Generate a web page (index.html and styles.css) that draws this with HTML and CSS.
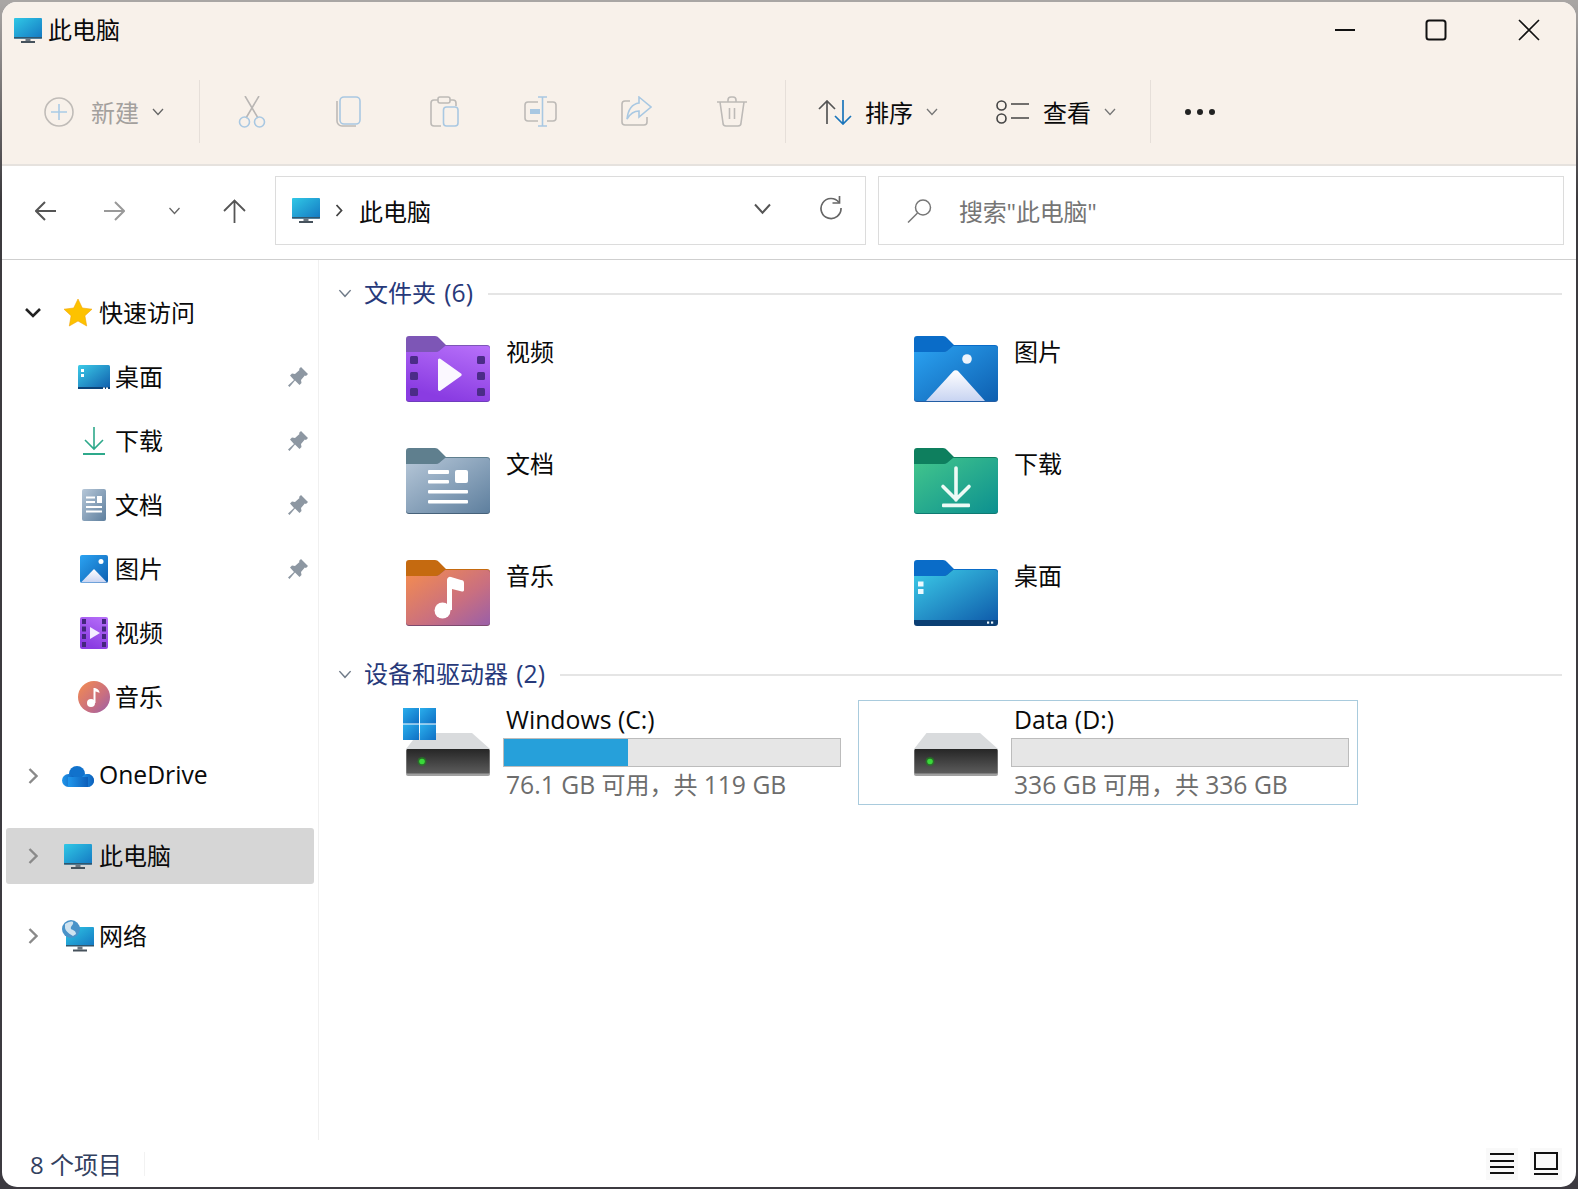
FILE: index.html
```html
<!DOCTYPE html>
<html lang="zh-CN">
<head>
<meta charset="utf-8">
<title>此电脑</title>
<link rel="stylesheet" href="styles.css">
</head>
<body>
<svg class="defs" aria-hidden="true">
  <defs>
    <linearGradient id="gMon" x1="0" y1="0" x2="1" y2="1"><stop offset="0" stop-color="#30c8e6"/><stop offset="1" stop-color="#1478c2"/></linearGradient>
    <linearGradient id="gVid" x1="1" y1="0" x2="0.6" y2="1"><stop offset="0" stop-color="#b871fa"/><stop offset="1" stop-color="#8a3ce2"/></linearGradient>
    <linearGradient id="gDoc" x1="0" y1="0" x2="1" y2="1"><stop offset="0" stop-color="#b6c7d8"/><stop offset="1" stop-color="#5e7f9e"/></linearGradient>
    <linearGradient id="gMus" x1="0" y1="0" x2="1" y2="1"><stop offset="0" stop-color="#f58d4e"/><stop offset="0.6" stop-color="#c96f80"/><stop offset="1" stop-color="#9a5fa8"/></linearGradient>
    <linearGradient id="gPic" x1="0" y1="0" x2="1" y2="1"><stop offset="0" stop-color="#2ba3f2"/><stop offset="1" stop-color="#0e5fb0"/></linearGradient>
    <linearGradient id="gMnt" x1="0" y1="0" x2="0" y2="1"><stop offset="0" stop-color="#ffffff"/><stop offset="1" stop-color="#c8d4f2"/></linearGradient>
    <linearGradient id="gDl" x1="0" y1="0" x2="1" y2="1"><stop offset="0" stop-color="#43c68c"/><stop offset="1" stop-color="#0c9090"/></linearGradient>
    <linearGradient id="gDsk" x1="0" y1="0" x2="1" y2="1"><stop offset="0" stop-color="#3ccbe8"/><stop offset="1" stop-color="#0f5cab"/></linearGradient>
    <linearGradient id="gDrv" x1="0" y1="0" x2="0" y2="1"><stop offset="0" stop-color="#262626"/><stop offset="1" stop-color="#5c5c5c"/></linearGradient>
    <linearGradient id="gWin" x1="0" y1="0" x2="1" y2="1"><stop offset="0" stop-color="#2aaeec"/><stop offset="1" stop-color="#0f6fc4"/></linearGradient>
    <linearGradient id="gCld" x1="0" y1="0" x2="1" y2="0"><stop offset="0" stop-color="#2097ec"/><stop offset="1" stop-color="#0d5fba"/></linearGradient>
    <symbol id="monitor" viewBox="0 0 28 25">
      <rect x="0" y="0" width="28" height="20.5" rx="1" fill="url(#gMon)"/>
      <rect x="0" y="19" width="28" height="1.6" fill="#30566e"/>
      <rect x="11.5" y="20.5" width="5" height="2.5" fill="#6b7680"/>
      <rect x="7" y="23" width="14" height="2" fill="#46525c"/>
    </symbol>
    <symbol id="drive" viewBox="0 0 84 43">
      <path d="M12.5 0H66L84 16H0Z" fill="#d9dbdd"/>
      <rect x="0" y="16" width="84" height="27" rx="2" fill="#a0a0a0"/>
      <rect x="0.5" y="16" width="83" height="24.5" rx="1" fill="url(#gDrv)"/>
      <circle cx="16" cy="28.5" r="4.5" fill="#1d8a1d" opacity=".6"/>
      <circle cx="16" cy="28.5" r="2.8" fill="#39d939"/>
    </symbol>
    <symbol id="chev" viewBox="0 0 12 8"><path d="M1 1l5 5.5L11 1" fill="none" stroke="currentColor" stroke-width="1.3"/></symbol>
    <symbol id="pin" viewBox="0 0 20 20"><path d="M13 0l7 7-2 2-1.200-.4L13 13l.5 3-2 2L7 13.500 1.500 20 0 18.500 6 13 2 8.500l2-2 3 .5 4.500-4-.5-1z" fill="#8d97a2"/></symbol>
  </defs>
</svg>

<div class="window">
  <header class="titlebar">
    <svg class="ico-title"><use href="#monitor"/></svg>
    <span class="title-text">此电脑</span>
    <div class="controls">
      <button class="ctl"><svg width="22" height="22"><path d="M1 11h20" stroke="#111" stroke-width="2"/></svg></button>
      <button class="ctl ctl-max"><svg width="22" height="22"><rect x="1.500" y="1.500" width="19" height="19" rx="2.500" fill="none" stroke="#111" stroke-width="2"/></svg></button>
      <button class="ctl"><svg width="22" height="22"><path d="M1 1l20 20M21 1L1 21" stroke="#111" stroke-width="1.600"/></svg></button>
    </div>
  </header>

  <div class="toolbar">
    <div class="tb-new">
      <svg width="30" height="30"><circle cx="15" cy="15" r="14" fill="none" stroke="#c0bcb8" stroke-width="1.600"/><path d="M15 7v16M7 15h16" stroke="#a9cbe6" stroke-width="1.600"/></svg>
      <span class="disabled-text">新建</span>
      <svg class="chev chev-muted"><use href="#chev"/></svg>
    </div>
    <i class="sep sep-a"></i>
    <div class="tb-icons">
      <span class="tb-ico"><svg width="28" height="32" fill="none" stroke-width="1.600"><path d="M7 0l13 22M21 0L8 22" stroke="#b9b6b4"/><circle cx="6.500" cy="26" r="5" stroke="#a9c8e2"/><circle cx="21.500" cy="26" r="5" stroke="#a9c8e2"/></svg></span>
      <span class="tb-ico"><svg width="25" height="31" fill="none" stroke-width="1.600"><rect x="4" y="1" width="20" height="27" rx="4" stroke="#a9c8e2"/><path d="M1 5v20a5 5 0 0 0 5 5h14" stroke="#bdbab7"/></svg></span>
      <span class="tb-ico"><svg width="29" height="31" fill="none" stroke-width="1.600"><path d="M8 4H4a3 3 0 0 0-3 3v20a3 3 0 0 0 3 3h7M20 4h3a3 3 0 0 1 3 3v3" stroke="#bdbab7"/><rect x="8" y="1" width="12" height="6" rx="2" stroke="#bdbab7"/><rect x="13.500" y="11" width="14.500" height="19" rx="3" stroke="#a9c8e2"/></svg></span>
      <span class="tb-ico"><svg width="33" height="31" fill="none" stroke-width="1.600"><path d="M14 6H4a3 3 0 0 0-3 3v13a3 3 0 0 0 3 3h10M23 6h6a3 3 0 0 1 3 3v13a3 3 0 0 1-3 3h-6" stroke="#bdbab7"/><path d="M14 1h9M14 30h9M18.500 1v29" stroke="#a9c8e2"/><rect x="6" y="13" width="10" height="5" fill="#a9c8e2"/></svg></span>
      <span class="tb-ico"><svg width="32" height="30" fill="none" stroke-width="1.600"><path d="M10 5H5a3 3 0 0 0-3 3v18a3 3 0 0 0 3 3h19a3 3 0 0 0 3-3v-5" stroke="#bdbab7"/><path d="M19 1l12 10-12 10v-6c-6 0-9 3-12 8 1-9 5-15 12-16z" stroke="#a9c8e2"/></svg></span>
      <span class="tb-ico"><svg width="30" height="31" fill="none" stroke-width="1.600" stroke="#bdbab7"><path d="M0 6h30M11 6V4a3 3 0 0 1 3-3h2a3 3 0 0 1 3 3v2M3 6l3 21a3 3 0 0 0 3 3h12a3 3 0 0 0 3-3l3-21M12.500 12v11M17.500 12v11"/></svg></span>
    </div>
    <i class="sep sep-b"></i>
    <div class="tb-sort">
      <svg width="34" height="25" fill="none" stroke-width="1.700"><path d="M1 9l8-8 8 8M9 1v23" stroke="#555"/><path d="M17 16l8 8 8-8M25 24V0" stroke="#1a75bb"/></svg>
      <span class="tb-label tb-label-sort">排序</span>
      <svg class="chev chev-dark"><use href="#chev"/></svg>
    </div>
    <div class="tb-view">
      <svg width="33" height="24" fill="none" stroke="#444" stroke-width="1.600"><circle cx="5.500" cy="5.500" r="4.500"/><circle cx="5.500" cy="18.500" r="4.500"/><path d="M15 4h18M15 18h18"/></svg>
      <span class="tb-label">查看</span>
      <svg class="chev chev-dark"><use href="#chev"/></svg>
    </div>
    <i class="sep sep-c"></i>
    <svg class="tb-more" width="32" height="8" fill="#222"><circle cx="4" cy="4" r="3"/><circle cx="16" cy="4" r="3"/><circle cx="28" cy="4" r="3"/></svg>
  </div>

  <nav class="navbar">
    <svg class="nav-back" width="22" height="20" fill="none" stroke="#555" stroke-width="2"><path d="M21 10H2M10 1l-9 9 9 9"/></svg>
    <svg class="nav-fwd" width="22" height="20" fill="none" stroke="#999" stroke-width="2"><path d="M1 10h19M12 1l9 9-9 9"/></svg>
    <svg class="nav-down"><use href="#chev"/></svg>
    <svg class="nav-up" width="23" height="24" fill="none" stroke="#555" stroke-width="1.800"><path d="M11.500 24V2M1 12L11.500 1.500 22 12"/></svg>
    <div class="addr">
      <svg class="ico-title"><use href="#monitor"/></svg>
      <svg class="addr-sep" width="8" height="13" fill="none" stroke="#444" stroke-width="1.800"><path d="M1.500 1l5 5.500-5 5.500"/></svg>
      <span class="addr-text">此电脑</span>
      <svg class="addr-drop"><use href="#chev"/></svg>
      <svg class="addr-refresh" width="24" height="24" fill="none" stroke="#666" stroke-width="1.700"><path d="M20 6.500A10 10 0 1 0 22 12"/><path d="M20.500 0v7h-7"/></svg>
    </div>
    <div class="search">
      <svg width="25" height="24" fill="none" stroke="#777" stroke-width="1.500"><circle cx="16" cy="8.500" r="7.500"/><path d="M10.500 14L1 23.500"/></svg>
      <span class="search-text">搜索"此电脑"</span>
    </div>
  </nav>

  <div class="main">
    <aside class="sidebar">
      <div class="tree-row">
        <span class="tree-chev"><svg width="16" height="10" fill="none" stroke="#222" stroke-width="2.600"><path d="M1 1l7 7 7-7"/></svg></span>
        <span class="tree-ico"><svg width="28" height="28"><path d="M14 0l4.300 9 9.700 1.200-7.100 6.600L22.700 27 14 22 5.300 27l1.800-10.200L0 10.200 9.700 9z" fill="#fdc200" stroke="#f2a60c" stroke-width=".6"/></svg></span>
        <span class="tree-label">快速访问</span>
      </div>
      <div class="tree-row sub">
        <span class="tree-ico"><svg width="32" height="24"><rect width="32" height="24" rx="1.500" fill="url(#gDsk)"/><rect y="22" width="32" height="2" fill="#0c4378"/><rect x="3" y="4" width="3" height="3" fill="#fff"/><rect x="3" y="9" width="3" height="3" fill="#fff"/><rect x="25" y="22.500" width="2" height="1.500" fill="#fff"/><rect x="28" y="22.500" width="2" height="1.500" fill="#fff"/></svg></span>
        <span class="tree-label">桌面</span>
        <svg class="pin"><use href="#pin"/></svg>
      </div>
      <div class="tree-row sub">
        <span class="tree-ico"><svg width="22" height="28" fill="none" stroke="#2ea98b" stroke-width="1.600"><path d="M11 0v22M2 13l9 9 9-9"/><path d="M0 27h22" stroke-width="2"/></svg></span>
        <span class="tree-label">下载</span>
        <svg class="pin"><use href="#pin"/></svg>
      </div>
      <div class="tree-row sub">
        <span class="tree-ico"><svg width="24" height="32"><rect width="24" height="32" rx="2" fill="url(#gDoc)"/><path d="M4 8.500h9M4 13h9M4 18h16M4 22.500h16" stroke="#fff" stroke-width="2"/><rect x="15" y="7" width="5" height="7" fill="#fff"/></svg></span>
        <span class="tree-label">文档</span>
        <svg class="pin"><use href="#pin"/></svg>
      </div>
      <div class="tree-row sub">
        <span class="tree-ico"><svg width="28" height="28"><rect width="28" height="28" rx="2" fill="url(#gPic)"/><path d="M1 27.500L14 14l13 13.500z" fill="url(#gMnt)"/><circle cx="21" cy="6.500" r="2.500" fill="#fff"/></svg></span>
        <span class="tree-label">图片</span>
        <svg class="pin"><use href="#pin"/></svg>
      </div>
      <div class="tree-row sub">
        <span class="tree-ico"><svg width="28" height="32"><rect width="28" height="32" rx="2" fill="url(#gVid)"/><g fill="#44267e"><rect x="2" y="2" width="4" height="5"/><rect x="2" y="9.500" width="4" height="5"/><rect x="2" y="17" width="4" height="5"/><rect x="2" y="25" width="4" height="5"/><rect x="22" y="2" width="4" height="5"/><rect x="22" y="9.500" width="4" height="5"/><rect x="22" y="17" width="4" height="5"/><rect x="22" y="25" width="4" height="5"/></g><path d="M10 10l10 6-10 6z" fill="#f4edff"/></svg></span>
        <span class="tree-label">视频</span>
      </div>
      <div class="tree-row sub">
        <span class="tree-ico"><svg width="32" height="32"><circle cx="16" cy="16" r="16" fill="url(#gMus)"/><circle cx="13" cy="22" r="4" fill="#fff"/><path d="M15.500 22V7c3 0 6 1.500 6 5-2-1-3.500-1.500-4-1.500V22z" fill="#fff"/></svg></span>
        <span class="tree-label">音乐</span>
      </div>
      <div class="roots">
        <div class="tree-row root">
          <span class="tree-chev"><svg width="10" height="16" fill="none" stroke="#8a8a8a" stroke-width="2.400"><path d="M1.500 1l7 7-7 7"/></svg></span>
          <span class="tree-ico"><svg width="32" height="21"><g fill="#1172cc"><circle cx="15" cy="8" r="8"/><circle cx="25.500" cy="14.500" r="6.500"/></g><g fill="url(#gCld)"><circle cx="6.500" cy="14.500" r="6.500"/><circle cx="25.500" cy="14.500" r="6.500"/><rect x="6" y="11" width="20" height="10"/></g></svg></span>
          <span class="tree-label tree-latin">OneDrive</span>
        </div>
        <div class="tree-row root selected">
          <span class="tree-chev"><svg width="10" height="16" fill="none" stroke="#8a8a8a" stroke-width="2.400"><path d="M1.500 1l7 7-7 7"/></svg></span>
          <span class="tree-ico"><svg class="ico-title"><use href="#monitor"/></svg></span>
          <span class="tree-label">此电脑</span>
        </div>
        <div class="tree-row root">
          <span class="tree-chev"><svg width="10" height="16" fill="none" stroke="#8a8a8a" stroke-width="2.400"><path d="M1.500 1l7 7-7 7"/></svg></span>
          <span class="tree-ico"><svg width="32" height="32"><rect x="4" y="7" width="28" height="19" rx="1" fill="url(#gMon)"/><rect x="4" y="25" width="28" height="1.500" fill="#30566e"/><rect x="15.500" y="26.500" width="5" height="3" fill="#6b7680"/><rect x="11" y="29.500" width="14" height="2" fill="#46525c"/><circle cx="9" cy="9" r="9" fill="#4a93c9"/><path d="M3 4c3-2 6-3 8-2 1 3-3 4-2 7 2 1 5 2 5 5l-3 2c-3-2-7-4-8-8z" fill="#cfe3f0"/></svg></span>
          <span class="tree-label">网络</span>
        </div>
      </div>
    </aside>

    <main class="content">
      <section class="group">
        <div class="group-head">
          <svg class="group-chev"><use href="#chev"/></svg>
          <span class="group-title">文件夹 <span class="num">(6)</span></span>
          <i class="group-line"></i>
        </div>
        <div class="folders">
          <div class="folder">
            <svg class="folder-ico" viewBox="0 0 84 66"><path d="M3 0h26a5 5 0 0 1 4 2l7 7h41a3 3 0 0 1 3 3v20H0V3a3 3 0 0 1 3-3z" fill="#7d56b6"/><path d="M0 16h30a5 5 0 0 0 3-1l6-5h42a3 3 0 0 1 3 3v50a3 3 0 0 1-3 3H3a3 3 0 0 1-3-3z" fill="#6f3dbd"/><path d="M0 16h30a5 5 0 0 0 3-1l6-5h42a3 3 0 0 1 3 3v49a3 3 0 0 1-3 3H3a3 3 0 0 1-3-3z" fill="url(#gVid)"/><g fill="#4b2c88"><rect x="4" y="20" width="8" height="8" rx="1.500"/><rect x="4" y="36" width="8" height="8" rx="1.500"/><rect x="4" y="52" width="8" height="8" rx="1.500"/><rect x="71" y="20" width="8" height="8" rx="1.500"/><rect x="71" y="36" width="8" height="8" rx="1.500"/><rect x="71" y="52" width="8" height="8" rx="1.500"/></g><path d="M32 24a1.500 1.500 0 0 1 2.300-1.300L55 37.500a1.500 1.500 0 0 1 0 2.500L34.300 54.800A1.500 1.500 0 0 1 32 53.500z" fill="#fbf8ff"/></svg>
            <span class="folder-name">视频</span>
          </div>
          <div class="folder">
            <svg class="folder-ico" viewBox="0 0 84 66"><path d="M3 0h26a5 5 0 0 1 4 2l7 7h41a3 3 0 0 1 3 3v20H0V3a3 3 0 0 1 3-3z" fill="#0a6cc8"/><path d="M0 16h30a5 5 0 0 0 3-1l6-5h42a3 3 0 0 1 3 3v50a3 3 0 0 1-3 3H3a3 3 0 0 1-3-3z" fill="#225da4"/><path d="M0 16h30a5 5 0 0 0 3-1l6-5h42a3 3 0 0 1 3 3v49a3 3 0 0 1-3 3H3a3 3 0 0 1-3-3z" fill="url(#gPic)"/><circle cx="53" cy="23" r="4.800" fill="#eef4fc"/><path d="M12 65l27-29.500a3.500 3.500 0 0 1 5.500 0L71 65z" fill="url(#gMnt)"/></svg>
            <span class="folder-name">图片</span>
          </div>
          <div class="folder">
            <svg class="folder-ico" viewBox="0 0 84 66"><path d="M3 0h26a5 5 0 0 1 4 2l7 7h41a3 3 0 0 1 3 3v20H0V3a3 3 0 0 1 3-3z" fill="#5f7f8e"/><path d="M0 16h30a5 5 0 0 0 3-1l6-5h42a3 3 0 0 1 3 3v50a3 3 0 0 1-3 3H3a3 3 0 0 1-3-3z" fill="#47627a"/><path d="M0 16h30a5 5 0 0 0 3-1l6-5h42a3 3 0 0 1 3 3v49a3 3 0 0 1-3 3H3a3 3 0 0 1-3-3z" fill="url(#gDoc)"/><g fill="#fff"><rect x="22" y="22" width="21" height="4" rx="1"/><rect x="22" y="32" width="21" height="3.500" rx="1"/><rect x="22" y="42" width="40" height="3.500" rx="1"/><rect x="22" y="52" width="40" height="3.500" rx="1"/><rect x="49" y="22" width="13" height="13" rx="2"/></g></svg>
            <span class="folder-name">文档</span>
          </div>
          <div class="folder">
            <svg class="folder-ico" viewBox="0 0 84 66"><path d="M3 0h26a5 5 0 0 1 4 2l7 7h41a3 3 0 0 1 3 3v20H0V3a3 3 0 0 1 3-3z" fill="#0e7f5e"/><path d="M0 16h30a5 5 0 0 0 3-1l6-5h42a3 3 0 0 1 3 3v50a3 3 0 0 1-3 3H3a3 3 0 0 1-3-3z" fill="#0f7a72"/><path d="M0 16h30a5 5 0 0 0 3-1l6-5h42a3 3 0 0 1 3 3v49a3 3 0 0 1-3 3H3a3 3 0 0 1-3-3z" fill="url(#gDl)"/><path d="M42 20v32M29 38.500L42 51.500 55 38.500" fill="none" stroke="#eefaf6" stroke-width="3.600" stroke-linecap="round"/><rect x="28" y="55.500" width="28" height="3.800" rx="1" fill="#eefaf6"/></svg>
            <span class="folder-name">下载</span>
          </div>
          <div class="folder">
            <svg class="folder-ico" viewBox="0 0 84 66"><path d="M3 0h26a5 5 0 0 1 4 2l7 7h41a3 3 0 0 1 3 3v20H0V3a3 3 0 0 1 3-3z" fill="#c56a10"/><path d="M0 16h30a5 5 0 0 0 3-1l6-5h42a3 3 0 0 1 3 3v50a3 3 0 0 1-3 3H3a3 3 0 0 1-3-3z" fill="#7d4a6e"/><path d="M0 16h30a5 5 0 0 0 3-1l6-5h42a3 3 0 0 1 3 3v49a3 3 0 0 1-3 3H3a3 3 0 0 1-3-3z" fill="url(#gMus)"/><circle cx="36.500" cy="50.500" r="8" fill="#fff"/><path d="M41 50V20a3 3 0 0 1 4-3l10 3a3 3 0 0 1 3 3v7a1.500 1.500 0 0 1-2 1.500L46 29v21z" fill="#fff"/></svg>
            <span class="folder-name">音乐</span>
          </div>
          <div class="folder">
            <svg class="folder-ico" viewBox="0 0 84 66"><path d="M3 0h26a5 5 0 0 1 4 2l7 7h41a3 3 0 0 1 3 3v20H0V3a3 3 0 0 1 3-3z" fill="#0a6cc8"/><path d="M0 16h30a5 5 0 0 0 3-1l6-5h42a3 3 0 0 1 3 3v50a3 3 0 0 1-3 3H3a3 3 0 0 1-3-3z" fill="#0b3f74"/><path d="M0 16h30a5 5 0 0 0 3-1l6-5h42a3 3 0 0 1 3 3v47H0z" fill="url(#gDsk)"/><g fill="#eefaff"><rect x="4" y="21.500" width="5.500" height="5"/><rect x="4" y="29" width="5.500" height="5"/><rect x="73" y="61.500" width="2.200" height="2.200"/><rect x="77" y="61.500" width="2.200" height="2.200"/></g></svg>
            <span class="folder-name">桌面</span>
          </div>
        </div>
      </section>

      <section class="group group-drives">
        <div class="group-head">
          <svg class="group-chev"><use href="#chev"/></svg>
          <span class="group-title">设备和驱动器 <span class="num">(2)</span></span>
          <i class="group-line"></i>
        </div>
        <div class="drives">
          <div class="drive">
            <div class="drive-ico">
              <svg class="win-logo" width="33" height="32"><rect width="16" height="15.500" fill="url(#gWin)"/><rect x="17" width="16" height="15.500" fill="url(#gWin)"/><rect y="16.500" width="16" height="15.500" fill="url(#gWin)"/><rect x="17" y="16.500" width="16" height="15.500" fill="url(#gWin)"/></svg>
              <svg class="drive-svg"><use href="#drive"/></svg>
            </div>
            <div class="drive-info">
              <span class="drive-name">Windows (C:)</span>
              <div class="bar"><div class="bar-fill" style="width:37%"></div></div>
              <span class="drive-free"><span class="num">76.1 GB</span> 可用，共 <span class="num">119 GB</span></span>
            </div>
          </div>
          <div class="drive focused">
            <div class="drive-ico">
              <svg class="drive-svg"><use href="#drive"/></svg>
            </div>
            <div class="drive-info">
              <span class="drive-name">Data (D:)</span>
              <div class="bar"></div>
              <span class="drive-free"><span class="num">336 GB</span> 可用，共 <span class="num">336 GB</span></span>
            </div>
          </div>
        </div>
      </section>
    </main>
  </div>

  <footer class="statusbar">
    <span class="status-text">8 个项目</span>
    <i class="status-sep"></i>
    <div class="status-views">
      <span class="view-btn"><svg width="24" height="21" stroke="#111" stroke-width="2"><path d="M0 1h24M0 8h24M0 14h24M0 20h24"/></svg></span>
      <span class="view-btn"><svg width="24" height="23" fill="none" stroke="#111" stroke-width="2"><rect x="1" y="1" width="22" height="16"/><path d="M0 22h24"/></svg></span>
    </div>
  </footer>
</div>
</body>
</html>
```

FILE: styles.css
```css
* { box-sizing: border-box; }

html, body { margin: 0; height: 100%; }

body {
  width: 1578px;
  height: 1189px;
  overflow: hidden;
  padding: 2px;
  background: linear-gradient(#a9a6a4 0, #a9a6a4 3px, #3c3a3e 200px, #3c3a40 100%);
  font-family: "Open Sans", "Noto Sans CJK SC", sans-serif;
  color: #0a0a0a;
}

.defs { position: absolute; width: 0; height: 0; }

.window {
  width: 1574px;
  height: 1185px;
  display: flex;
  flex-direction: column;
  background: #fff;
  border-radius: 15px;
  overflow: hidden;
}

svg { display: block; flex: none; }

.num { font-size: 24.7px; }

/* title bar */
.titlebar {
  height: 56px;
  flex: none;
  display: flex;
  align-items: center;
  padding: 0 1px 0 12px;
  background: #f8f1ea;
}

.ico-title { width: 28px; height: 25px; }

.title-text { margin-left: 6px; font-size: 24px; line-height: 32px; }

.controls { margin-left: auto; display: flex; }

.ctl {
  width: 92px;
  height: 40px;
  padding: 0;
  border: 0;
  background: none;
  display: flex;
  align-items: center;
  justify-content: center;
}

.ctl-max svg { margin-right: 3px; }

/* tool bar */
.toolbar {
  height: 108px;
  flex: none;
  display: flex;
  align-items: center;
  padding: 2px 0 0 42px;
  background: #f8f1ea;
  border-bottom: 2px solid #e6e2de;
}

.tb-new { display: flex; align-items: center; width: 120px; }

.disabled-text { margin-left: 17px; padding-bottom: 2px; font-size: 24px; color: #a3a09d; }

.chev { width: 12px; height: 8px; margin-left: 13px; }
.chev-muted { color: #666; }
.chev-dark { color: #777; }

.sep { width: 1px; height: 63px; margin-top: -2px; background: #e6dfd9; flex: none; }
.sep-a { margin-left: 35px; }
.sep-b { margin-left: 5px; }
.sep-c { margin-left: 34px; }

.tb-icons { display: flex; margin-left: 4px; }

.tb-ico {
  width: 96px;
  display: flex;
  justify-content: center;
}

.tb-sort { display: flex; align-items: center; margin-left: 32px; }

.tb-view { display: flex; align-items: center; margin-left: 58px; }

.tb-label { margin-left: 14px; padding-bottom: 2px; font-size: 24px; }

.tb-label-sort { margin-left: 13px; }

.tb-more { margin-left: 33px; }

/* address row */
.navbar {
  height: 94px;
  flex: none;
  display: flex;
  align-items: center;
  padding: 10px 12px 14px 33px;
  border-bottom: 1px solid #cfcfcf;
}

.nav-back { margin-right: 46px; }
.nav-fwd { margin-right: 43px; }
.nav-down { width: 13px; height: 8px; margin-right: 42px; color: #666; }
.nav-up { margin-right: 29px; }

.addr, .search {
  height: 69px;
  display: flex;
  align-items: center;
  border: 1px solid #dcdcdc;
  background: #fff;
}

.addr { width: 591px; padding-left: 16px; }

.addr-sep { margin-left: 15px; }

.addr-text { margin-left: 16px; font-size: 24px; }

.addr-drop { width: 21px; height: 12px; margin-left: auto; margin-top: -4px; color: #555; }

.addr-refresh { margin: -6px 22px 0 46px; }

.search { flex: 1; margin-left: 12px; padding-left: 28px; }

.search-text { margin-left: 27px; font-size: 24px; color: #757575; letter-spacing: -.2px; }

/* body */
.main { flex: 1; min-height: 0; display: flex; }

.sidebar {
  width: 317px;
  flex: none;
  padding-top: 21px;
  border-right: 1px solid #f0f0f0;
}

.tree-row {
  height: 64px;
  margin: 0 4px;
  display: flex;
  align-items: center;
  font-size: 24px;
}

.tree-row.sub { padding-left: 70px; }

.tree-chev {
  width: 54px;
  display: flex;
  justify-content: center;
}

.tree-ico {
  width: 36px;
  display: flex;
  justify-content: center;
  align-items: center;
  margin-right: 3px;
}

.tree-label { padding-bottom: 4px; }

.tree-latin { font-size: 24.7px; }

.pin { width: 20px; height: 20px; margin-left: auto; margin-right: 6px; }

.roots {
  display: flex;
  flex-direction: column;
  gap: 24px;
  padding-top: 19px;
}

.tree-row.root { height: 56px; }

.selected { background: #d6d6d6; border-radius: 3px; }

.content { flex: 1; padding: 20px 14px 0 18px; min-width: 0; }

.group-head { height: 28px; display: flex; align-items: center; }

.group-chev { width: 16px; height: 9px; margin-top: -2px; color: #6f7a88; }

.group-title {
  margin-left: 11px;
  padding-bottom: 5px;
  font-size: 24px;
  word-spacing: 2px;
  color: #27397a;
}

.group-line { flex: 1; height: 2px; margin-left: 15px; background: #e5e5e5; }

.folders {
  display: grid;
  grid-template-columns: 508px 508px;
  row-gap: 46px;
  margin: 28px 0 0 69px;
}

.folder { height: 66px; display: flex; align-items: flex-start; }

.folder-ico { width: 84px; height: 66px; }

.folder-name { margin-left: 16px; font-size: 24px; line-height: 32px; }

.group-drives { margin-top: 35px; }

.drives {
  display: grid;
  grid-template-columns: 500px 500px;
  column-gap: 8px;
  margin: 11px 0 0 13px;
}

.drive {
  height: 105px;
  display: flex;
  padding-left: 55px;
  border: 1px solid transparent;
}

.drive.focused { border-color: #a9cbdd; }

.drive-ico { position: relative; width: 84px; padding-top: 32px; }

.drive-svg { width: 84px; height: 43px; }

.win-logo { position: absolute; left: -3px; top: 7px; }

.drive-info { width: 338px; margin-left: 13px; display: flex; flex-direction: column; }

.drive-name { padding-left: 3px; font-size: 24.8px; line-height: 37px; height: 37px; }

.bar { height: 29px; background: #e6e6e6; border: 1px solid #bcbcbc; }

.bar-fill { height: 100%; background: #26a0da; }

.drive-free { padding-left: 3px; font-size: 24px; line-height: 35px; height: 37px; color: #6d6d6d; }

/* status bar */
.statusbar {
  height: 47px;
  flex: none;
  display: flex;
  align-items: center;
  padding: 0 14px 0 28px;
}

.status-text { width: 114px; font-size: 24px; color: #33415f; }

.status-sep { width: 1px; height: 24px; background: #f2f2f2; }

.status-views { margin-left: auto; display: flex; gap: 12px; }

.view-btn {
  width: 32px;
  height: 32px;
  display: flex;
  align-items: center;
  justify-content: center;
  background: #f9f9f9;
}
```
